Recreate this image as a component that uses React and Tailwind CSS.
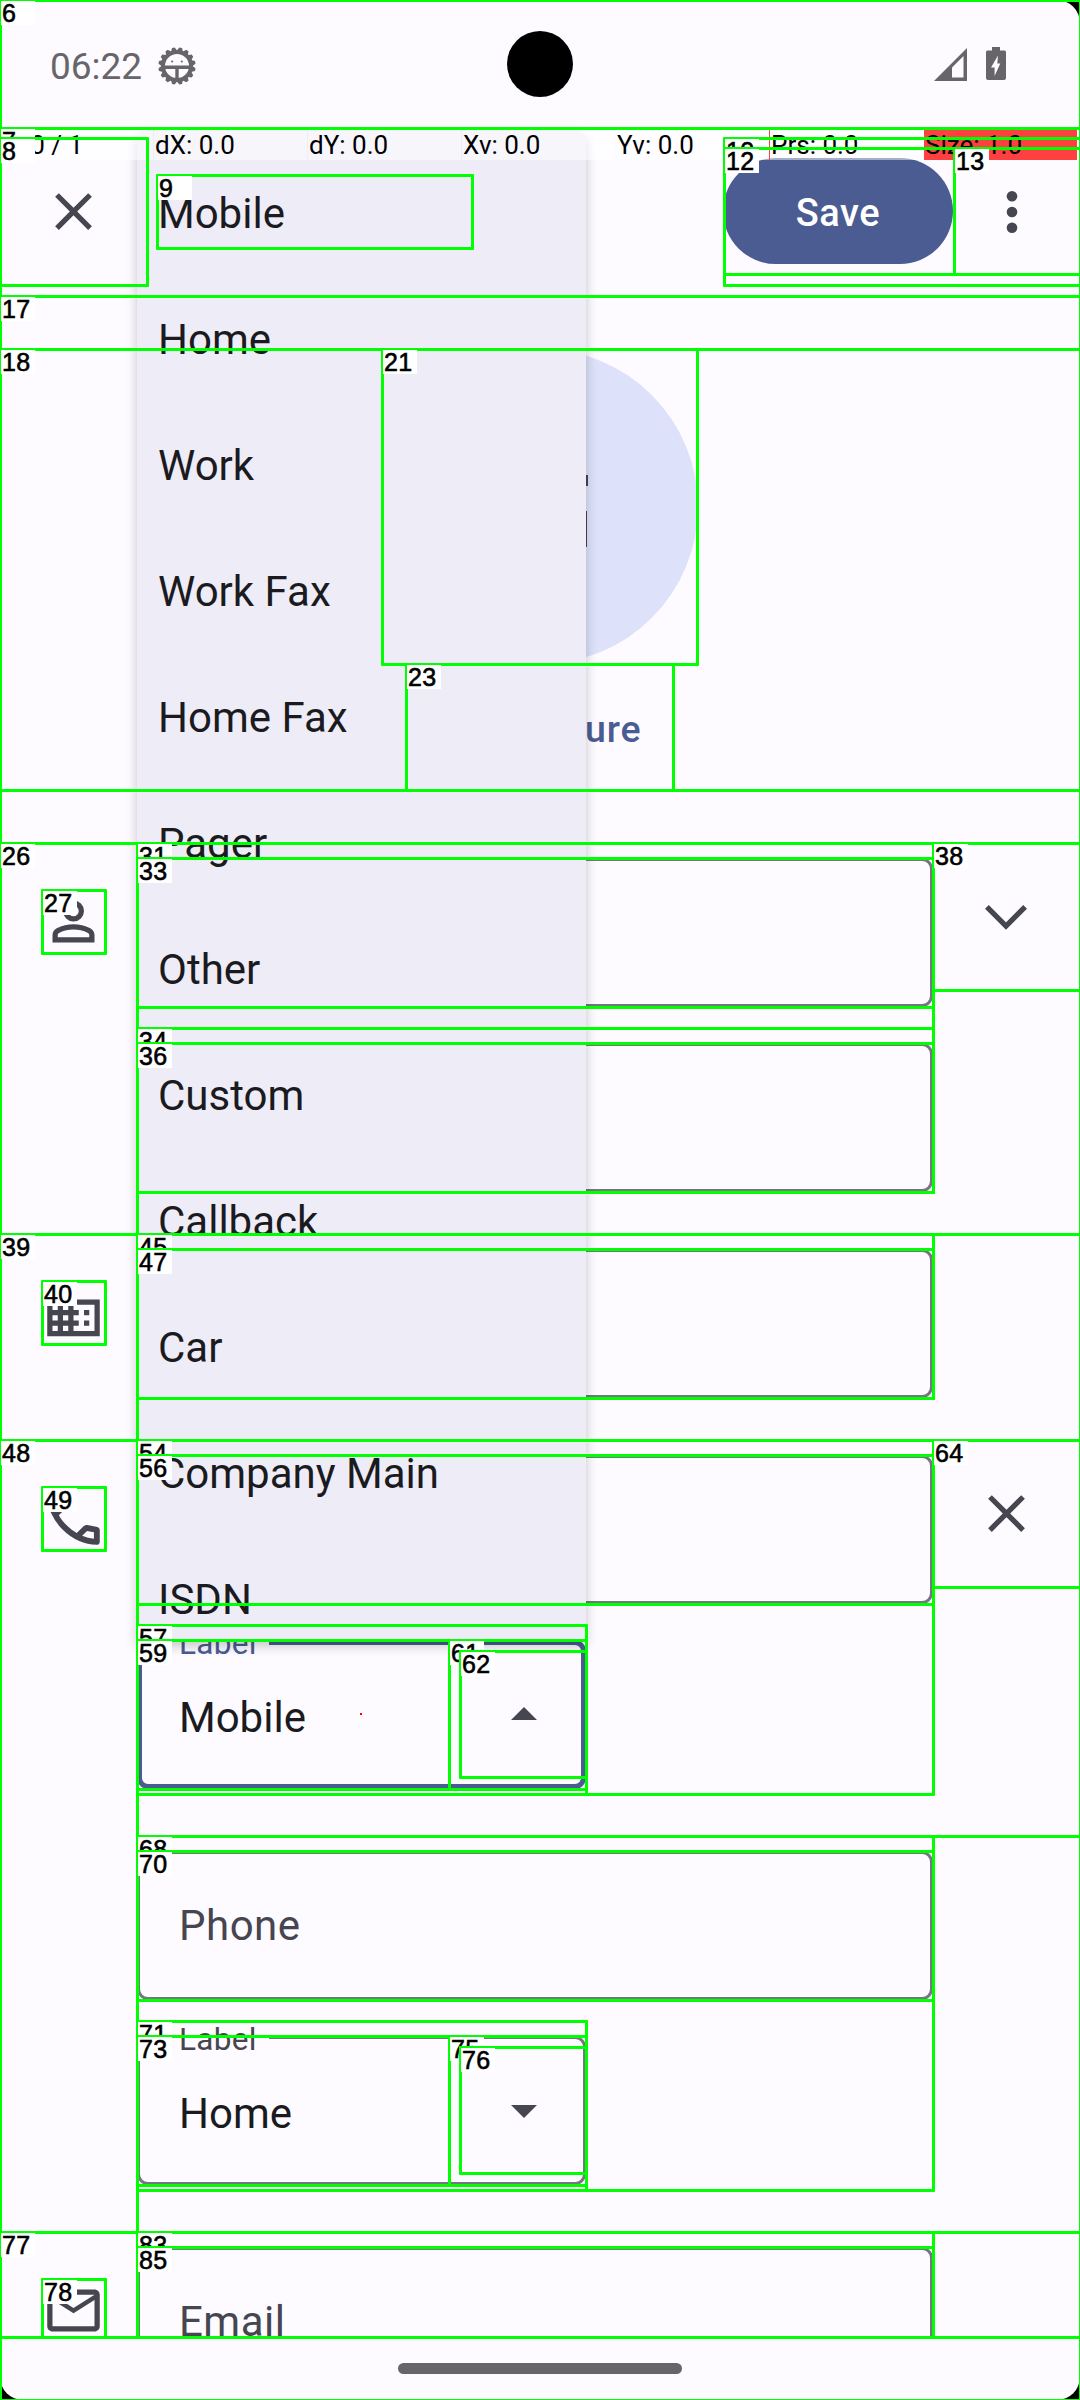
import React from "react";
import { MdClose, MdBusiness, MdOutlineEmail } from "react-icons/md";

const MENU_ITEMS = [
  "Mobile",
  "Home",
  "Work",
  "Work Fax",
  "Home Fax",
  "Pager",
  "Other",
  "Custom",
  "Callback",
  "Car",
  "Company Main",
  "ISDN",
];

// Accessibility node bounds: [label, left, top, right, bottom]
const NODES = [
  ["6", 0, 0, 1080, 2400],
  ["7", 0, 128, 1080, 296],
  ["8", 0, 138, 147, 285],
  ["9", 157, 175, 472, 248],
  ["10", 724, 138, 1080, 285],
  ["12", 724, 148, 954, 274],
  ["13", 954, 148, 1080, 274],
  ["17", 0, 296, 1080, 790],
  ["18", 0, 349, 1080, 790],
  ["21", 382, 349, 697, 664],
  ["23", 406, 664, 673, 790],
  ["26", 0, 843, 1080, 1234],
  ["27", 42, 890, 105, 953],
  ["", 137, 843, 1080, 1234],
  ["", 137, 843, 933, 1192],
  ["31", 137, 843, 933, 1007],
  ["33", 137, 858, 933, 1007],
  ["34", 137, 1028, 933, 1192],
  ["36", 137, 1043, 933, 1192],
  ["38", 933, 843, 1080, 990],
  ["39", 0, 1234, 1080, 1440],
  ["40", 42, 1281, 105, 1344],
  ["", 137, 1234, 1080, 1440],
  ["45", 137, 1234, 933, 1398],
  ["47", 137, 1249, 933, 1398],
  ["48", 0, 1440, 1080, 2232],
  ["49", 42, 1487, 105, 1550],
  ["", 137, 1440, 1080, 1836],
  ["", 137, 1440, 933, 1794],
  ["54", 137, 1440, 933, 1604],
  ["56", 137, 1455, 933, 1604],
  ["57", 137, 1625, 586, 1794],
  ["59", 137, 1640, 586, 1789],
  ["61", 449, 1640, 586, 1789],
  ["62", 460, 1651, 586, 1777],
  ["64", 933, 1440, 1080, 1587],
  ["", 137, 1836, 1080, 2232],
  ["", 137, 1836, 933, 2190],
  ["68", 137, 1836, 933, 2000],
  ["70", 137, 1851, 933, 2000],
  ["71", 137, 2021, 586, 2190],
  ["73", 137, 2036, 586, 2185],
  ["75", 449, 2036, 586, 2185],
  ["76", 460, 2047, 586, 2173],
  ["77", 0, 2232, 1080, 2337],
  ["78", 42, 2279, 105, 2337],
  ["", 137, 2232, 1080, 2337],
  ["83", 137, 2232, 933, 2337],
  ["85", 137, 2247, 933, 2337],
];

function NodeBox({ node }) {
  const [label, x1, y1, x2, y2] = node;
  return (
    <>
      <div
        className="absolute rounded-[1px] border-[3px] border-[#00ff00]"
        style={{ left: x1 - 1, top: y1 - 1, width: x2 - x1 + 3, height: y2 - y1 + 3 }}
      />
      {label && (
        <div
          className="absolute h-6 w-[34px] bg-white pl-[1px] font-['Liberation_Sans',sans-serif] text-[25px] leading-[25px] tracking-[0.4px] text-black [-webkit-text-stroke:0.6px_black]"
          style={{ left: x1 + 1, top: y1 + 1 }}
        >
          {label}
        </div>
      )}
    </>
  );
}

function DebugIcon() {
  const teeth = Array.from({ length: 16 }, (_, i) => i * 22.5 + 11.25);
  return (
    <svg className="ml-4 size-[38px]" viewBox="-19 -19 38 38">
      <g fill="#67656a">
        {teeth.map((a) => (
          <path key={a} d="M-3.6 -14 L-1.4 -18.6 L1.4 -18.6 L3.6 -14 Z" transform={`rotate(${a})`} />
        ))}
      </g>
      <circle r="14" fill="none" stroke="#67656a" strokeWidth="4" />
      <path d="M-14 1.2H14M0 1.2V14" stroke="#67656a" strokeWidth="3.400" />
      <circle cx="-4.8" cy="-4.5" r="1.1" fill="#67656a" />
      <circle cx="4.8" cy="-4.5" r="1.1" fill="#67656a" />
    </svg>
  );
}

function StatusBar() {
  return (
    <header className="relative flex h-32 shrink-0 items-start justify-between pl-[50px] pr-[74px] pt-[44px]">
      <div className="flex items-center">
        <span className="pt-[2px] text-[37px] leading-[42px] text-[#67656a]">06:22</span>
        <DebugIcon />
      </div>
      <div className="absolute left-[507px] top-[31px] size-[66px] rounded-full bg-black" />
      <div className="flex items-start gap-[19px] pt-[3px]">
        <svg className="h-[34px] w-[33px]" viewBox="0 0 33 34">
          <path d="M33 1V34H0Z" fill="#67656a" />
          <path d="M29.500 9V30.500H18V20.500Z" fill="#fdfbff" />
        </svg>
        <svg className="h-[34px] w-5" viewBox="0 0 20 34">
          <path d="M6 0h8v3.4h4.5q1.5 0 1.5 1.5V31q0 2-2 2H2q-2 0-2-2V4.900q0-1.500 1.500-1.500H6Z" fill="#67656a" />
          <path d="M12 8.500L5 20.500h3.600V29L14.300 16.500h-3Z" fill="#fdfbff" />
        </svg>
      </div>
    </header>
  );
}

function AppBar() {
  return (
    <div className="flex h-[168px] shrink-0 items-start">
      <div className="mt-[10px] flex size-[147px] items-center justify-center">
        <MdClose className="size-[63px] text-[#45464f]" />
      </div>
      <button className="ml-auto mt-[30px] h-[106px] w-[230px] rounded-full bg-[#4a5c92] pt-[4px] text-[38px] font-medium leading-[102px] tracking-[0.6px] text-white">
        Save
      </button>
      <div className="mt-[10px] flex h-[147px] w-[127px] items-center justify-center">
        <svg className="mr-[9px] h-[44px] w-3" viewBox="0 0 12 44">
          <circle cx="6" cy="6.300" r="5.300" fill="#45464f" />
          <circle cx="6" cy="22" r="5.300" fill="#45464f" />
          <circle cx="6" cy="37.700" r="5.300" fill="#45464f" />
        </svg>
      </div>
    </div>
  );
}

function PhotoPicker() {
  return (
    <div className="flex h-[547px] shrink-0 flex-col items-center pt-[53px]">
      <div className="flex size-[315px] shrink-0 items-center justify-center rounded-full bg-[#dde1f9]">
        <svg className="size-[95px]" viewBox="0 0 95 95" fill="none" stroke="#45464f" strokeWidth="8">
          <path d="M58 20H7V84H90V52" />
          <path d="M73 21.500H95" strokeWidth="11" />
        </svg>
      </div>
      <div className="flex h-[126px] items-center pt-[5px] text-[37.500px] font-medium tracking-[0.9px] text-[#4a5c92]">
        Add picture
      </div>
    </div>
  );
}

function Field({ hint, value, label, focused, arrow }) {
  return (
    <div
      className={
        "relative mt-[15px] flex h-[149px] shrink-0 items-center rounded-[11px] " +
        (focused ? "w-[449px] border-[5px] border-[#4a5c92] pl-[37px] " : "border-[3px] border-[#767680] pl-[39px] ") +
        (arrow && !focused ? "w-[449px]" : "")
      }
    >
      {label && (
        <span
          className={
            "absolute bg-[#fdfbff] pl-[9px] pr-3 text-[31.5px] leading-[38px] tracking-[0.3px] " +
            (focused ? "left-[28px] top-[-20px] text-[#4a5c92]" : "left-[30px] top-[-18px] text-[#45464f]")
          }
        >
          {label}
        </span>
      )}
      {hint && <span className="text-[42px] leading-[50px] tracking-[0.5px] text-[#45464f]">{hint}</span>}
      {value && <span className="pt-[7px] text-[42px] leading-[50px] text-[#1b1b1f]">{value}</span>}
      {arrow && (
        <svg
          className={"ml-auto h-[13px] w-[26px] " + (focused ? "mb-[3px] mr-[44px]" : "mt-[2px] mr-[46px]")}
          viewBox="0 0 26 13"
        >
          <path d={arrow === "up" ? "M0 13L13 0L26 13Z" : "M0 0H26L13 13Z"} fill="#45464f" />
        </svg>
      )}
    </div>
  );
}

function Section({ icon, action, children, className = "" }) {
  return (
    <section className={"flex shrink-0 items-start " + className}>
      <div className="w-[137px] pl-[42px] pt-[47px] text-[#45464f]">{icon}</div>
      <div className="flex w-[796px] flex-col">{children}</div>
      <div className="flex size-[147px] items-center justify-center text-[#45464f]">{action}</div>
    </section>
  );
}

const PersonIcon = () => (
  <svg className="size-[63px]" viewBox="0 -960 960 960" fill="currentColor">
    <path d="M480-480q-66 0-113-47t-47-113q0-66 47-113t113-47q66 0 113 47t47 113q0 66-47 113t-113 47ZM160-160v-112q0-34 17.500-62.500T224-378q62-31 126-46.500T480-440q66 0 130 15.500T736-378q29 15 46.500 43.500T800-272v112H160Zm80-80h480v-32q0-11-5.500-20T700-306q-54-27-109-40.500T480-360q-56 0-111 13.500T260-306q-9 5-14.500 14t-5.500 20v32Zm240-320q33 0 56.500-23.500T560-640q0-33-23.500-56.500T480-720q-33 0-56.500 23.500T400-640q0 33 23.500 56.500T480-560Z" />
  </svg>
);

const PhoneIcon = () => (
  <svg className="size-[63px]" viewBox="48 -912 864 864" fill="currentColor">
    <path d="M798-120q-125 0-247-54.500T329-329Q229-429 174.500-551T120-798q0-18 12-30t30-12h162q14 0 25 9.500t13 22.500l26 140q2 16-1 27t-11 19l-97 98q20 37 47.500 71.500T387-386q31 31 65 57.500t72 48.500l94-94q9-9 23.500-13.500T670-390l138 28q14 4 23 14.500t9 23.500v162q0 18-12 30t-30 12ZM241-600l66-66-17-94h-89q5 41 14 81t26 79Zm358 358q39 17 79.500 27t81.500 13v-88l-94-19-67 67Z" />
  </svg>
);

const ChevronIcon = () => (
  <svg className="mt-[2px] mr-px h-[25px] w-[42px]" viewBox="0 0 42 25" fill="none" stroke="currentColor" strokeWidth="5.300">
    <path d="M1.900 1.900L21 21L40.100 1.900" />
  </svg>
);

function LabelMenu() {
  return (
    <div className="absolute left-[137px] top-[130px] h-[1511px] w-[449px] rounded-t-[10px] bg-[#eeedf7] pt-[20px] shadow-[0_5px_12px_rgba(0,0,0,0.22)] [clip-path:inset(-10px_-16px_-16px_-16px)]">
      {MENU_ITEMS.map((item) => (
        <div key={item} className="flex h-[126px] items-center pl-[21px] text-[42px] text-[#1b1b1f]">
          {item}
        </div>
      ))}
    </div>
  );
}

function PointerBar() {
  const cells = ["P: 0 / 1", "dX: 0.0", "dY: 0.0", "Xv: 0.0", "Yv: 0.0", "Prs: 0.0"];
  return (
    <div className="absolute left-0 top-[128px] flex h-8 w-[1080px] gap-px text-[26px] leading-[34px] text-black">
      {cells.map((c) => (
        <div key={c} className="w-[153px] bg-white/50 pl-px">
          {c}
        </div>
      ))}
      <div className="w-[153px] bg-[#ff4040] pl-px">Size: 1.0</div>
      <div className="absolute left-[769px] top-0 h-8 w-px bg-[#ff4040]" />
    </div>
  );
}

export default function App() {
  return (
    <div className="h-[2400px] w-[1080px] overflow-hidden bg-black">
      <div className="relative flex h-[2400px] w-[1080px] flex-col overflow-hidden bg-black font-[Roboto,sans-serif]">
        <div className="flex h-[2400px] flex-col overflow-hidden rounded-[23px] bg-[#fdfbff]">
          <StatusBar />
          <AppBar />
          <main className="flex h-[2041px] shrink-0 flex-col overflow-hidden">
            <PhotoPicker />
            <Section className="h-[391px]" icon={<PersonIcon />} action={<ChevronIcon />}>
              <Field />
              <div className="pt-[21px]">
                <Field />
              </div>
            </Section>
            <Section className="h-[206px]" icon={<MdBusiness className="size-[63px]" />}>
              <Field />
            </Section>
            <Section className="h-[792px]" icon={<PhoneIcon />} action={<MdClose className="size-[63px]" />}>
              <div className="flex h-[396px] flex-col">
                <Field />
                <div className="pt-[21px]">
                  <Field label="Label" value="Mobile" focused arrow="up" />
                </div>
              </div>
              <div className="flex h-[396px] flex-col">
                <Field hint="Phone" />
                <div className="pt-[21px]">
                  <Field label="Label" value="Home" arrow="down" />
                </div>
              </div>
            </Section>
            <Section className="h-[206px]" icon={<MdOutlineEmail className="size-[63px]" />}>
              <Field hint="Email" />
            </Section>
          </main>
          <nav className="flex h-[63px] shrink-0 justify-center pt-[26px]">
            <div className="h-[11px] w-[284px] rounded-full bg-[#67656a]" />
          </nav>
        </div>
        <LabelMenu />
        <PointerBar />
        <div className="absolute left-[360px] top-[1713px] size-[2px] bg-[#ff0000]" />
        {NODES.map((n, i) => (
          <NodeBox key={i} node={n} />
        ))}
      </div>
    </div>
  );
}
